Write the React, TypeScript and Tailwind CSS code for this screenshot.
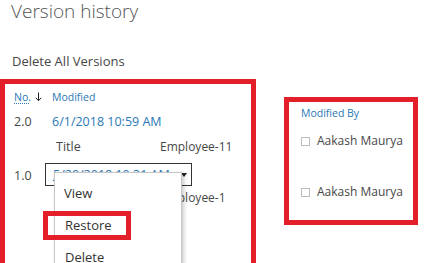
export default function App() {
  return (
    <div className="relative h-[263px] w-[425px] overflow-hidden bg-white font-['Open_Sans',sans-serif] text-[#474747]">
      <h1 className="-mt-[1px] pl-[11px] text-[19px] font-light leading-[24px] text-[#555]">Version history</h1>
      <p className="mt-[29px] pl-[12px] text-[13px] leading-[18px]">Delete All Versions</p>

      <div className="mt-[9px] flex items-start">
        {/* versions table */}
        <div className="relative h-[200px] w-[256px] shrink-0 border-[5px] border-[#e3202a] pl-[9px] pt-[5px]">
          <div className="flex h-[16px] items-center text-[10.5px] leading-[16px] text-[#2a78b5]">
            <div className="flex w-[38px] items-center">
              <span className="underline decoration-dotted decoration-[#2a78b5] underline-offset-2">No.</span>
              <svg width="7" height="10" viewBox="0 0 7 10" className="ml-[4px]">
                <path d="M3.5 0.5v8M0.8 5.8l2.7 2.9 2.7-2.9" fill="none" stroke="#222" strokeWidth="1" />
              </svg>
            </div>
            <span>Modified</span>
          </div>

          <div className="mt-[8px] flex h-[18px] items-center text-[12.5px] leading-[18px]">
            <span className="w-[38px]">2.0</span>
            <span className="text-[#2a78b5]">6/1/2018 10:59 AM</span>
          </div>

          <div className="mt-[7px] flex h-[18px] items-center text-[12.5px] leading-[18px]">
            <span className="w-[42px]" />
            <span className="w-[104px]">Title</span>
            <span className="text-[12px]">Employee-11</span>
          </div>

          <div className="mt-[7px] flex h-[23px] items-center text-[12.5px] leading-[18px]">
            <span className="w-[31px] pt-[2px]">1.0</span>
            <div className="flex h-[23px] w-[147px] items-center justify-between border border-[#333] pl-[7px] pr-[4px]">
              <span className="text-[#2a78b5] underline decoration-dotted">5/29/2018 10:31 AM</span>
              <svg width="6" height="4" viewBox="0 0 6 4">
                <path d="M0 0h6L3 4z" fill="#222" />
              </svg>
            </div>
          </div>

          <div className="mt-[3px] flex h-[18px] items-center text-[12.5px] leading-[18px]">
            <span className="w-[42px]" />
            <span className="w-[104px]">Title</span>
            <span className="text-[12px]">Employee-1</span>
          </div>

          {/* context menu */}
          <div className="absolute left-[49px] top-[88px] h-[120px] w-[128px] border border-[#c6c6c6] bg-white pt-[4px] text-[13px] leading-[32px] text-[#333] shadow-[2px_2px_4px_rgba(0,0,0,0.2)]">
            <div className="pl-[9px]">View</div>
            <div className="relative pl-[10px]">
              Restore
              <div className="absolute -left-[12px] top-[2px] h-[29px] w-[88px] border-[5px] border-[#e3202a]" />
            </div>
            <div className="pl-[10px]">Delete</div>
          </div>
        </div>

        {/* modified by column */}
        <div className="ml-[28px] mt-[18px] h-[128px] w-[134px] shrink-0 border-[5px] border-[#e3202a] pl-[12px] pt-[4px]">
          <div className="text-[10.5px] leading-[14px] text-[#2a78b5]">Modified By</div>
          <div className="mt-[12px] flex h-[18px] items-center text-[12px]">
            <span className="h-[9px] w-[9px] border border-[#bdbdbd]" />
            <span className="ml-[7px]">Aakash Maurya</span>
          </div>
          <div className="mt-[33px] flex h-[18px] items-center text-[12px]">
            <span className="h-[9px] w-[9px] border border-[#bdbdbd]" />
            <span className="ml-[7px]">Aakash Maurya</span>
          </div>
        </div>
      </div>
    </div>
  );
}
